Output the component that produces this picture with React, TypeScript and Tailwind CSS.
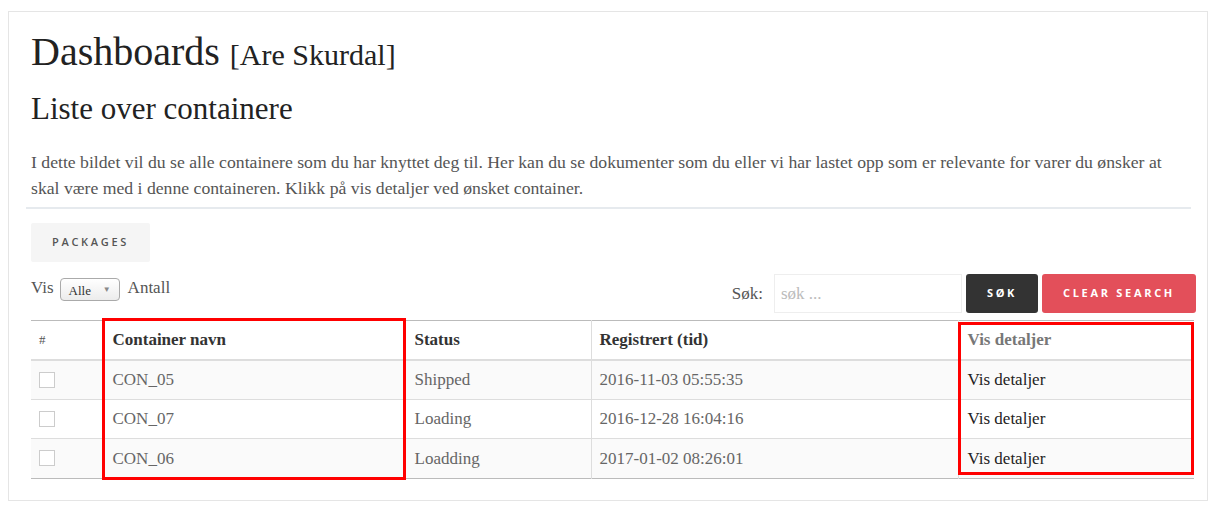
import React from "react"

const serif = "font-['Liberation_Serif','Times_New_Roman',serif]"
const caps = "font-['Open_Sans',sans-serif] font-bold uppercase tracking-[2.7px] text-[11px]"

const rows = [
  { name: "CON_05", status: "Shipped", time: "2016-11-03 05:55:35" },
  { name: "CON_07", status: "Loading", time: "2016-12-28 16:04:16" },
  { name: "CON_06", status: "Loadding", time: "2017-01-02 08:26:01" },
]

export default function App() {
  return (
    <div className={`${serif} bg-white min-h-[523px] w-[1218px] pt-[11px] pl-[8px]`}>
      <div className="w-[1200px] h-[490px] border border-[#e5e5e5] pl-[17px] pr-[11px]">
        <h1 className="mt-[16px] pl-[5px] text-[40px] leading-[48px] text-[#222]">
          Dashboards <span className="text-[30px]">[Are Skurdal]</span>
        </h1>
        <h2 className="mt-[12px] pl-[5px] text-[31px] leading-[36px] text-[#222]">Liste over containere</h2>
        <p className="mt-[22px] pl-[5px] text-[17.7px] leading-[26px] text-[#555] whitespace-nowrap">
          I dette bildet vil du se alle containere som du har knyttet deg til. Her kan du se dokumenter som du eller vi har lastet opp som er relevante for varer du ønsker at
          <br />
          skal være med i denne containeren. Klikk på vis detaljer ved ønsket container.
        </p>
        <div className="mt-[6px] mr-[5px] h-[2px] bg-[#e6eaee]" />

        <div className="mt-[14px] pl-[5px]">
          <button className={`${caps} h-[39px] w-[119px] rounded-[2px] bg-[#f5f5f5] text-[#555] !font-semibold`}>
            Packages
          </button>
        </div>

        <div className="mt-[12px] pl-[5px] flex justify-between items-start">
          <div className="flex items-center gap-[6px] text-[17px] leading-[24px] text-[#555]">
            <span>Vis</span>
            <span className="mt-[4px] flex items-center justify-between h-[23px] w-[60px] rounded-[4px] border border-[#aaa] bg-gradient-to-b from-white to-[#ececec] pl-[8px] pr-[8px] text-[13px] text-[#333]">
              <span className="mt-[3px]">Alle</span>
              <span className="text-[8px] text-[#888]">▼</span>
            </span>
            <span className="ml-[2px]">Antall</span>
          </div>
          <div className="flex items-center">
            <span className="text-[17px] text-[#555] mr-[11px]">Søk:</span>
            <div className="h-[39px] w-[188px] border border-[#eee] flex items-center pl-[6px] text-[17px] text-[#bbb]">
              søk ...
            </div>
            <button className={`${caps} ml-[4px] h-[39px] w-[72px] rounded-[3px] bg-[#333333] text-white`}>
              Søk
            </button>
            <button className={`${caps} ml-[4px] h-[39px] w-[154px] rounded-[3px] bg-[#e34f5a] text-white`}>
              Clear search
            </button>
          </div>
        </div>

        <div className="relative mt-[7px] ml-[5px] w-[1163px]">
          <table className="w-full table-fixed border-collapse text-[17px]">
            <colgroup>
              <col className="w-[71px]" />
              <col className="w-[303px]" />
              <col className="w-[186px]" />
              <col className="w-[367px]" />
              <col />
            </colgroup>
            <thead>
              <tr className="h-[39px] border-t border-[#bbb] border-b-2 border-b-[#ddd] text-left text-[#333]">
                <th className="pl-[8px] font-normal text-[13px] text-[#555]">#</th>
                <th className="pl-[10px] border-l border-[#ddd] font-bold">Container navn</th>
                <th className="pl-[9px] border-l border-[#ddd] font-bold">Status</th>
                <th className="pl-[8px] border-l border-[#ddd] font-bold">Registrert (tid)</th>
                <th className="pl-[9px] border-l border-[#ddd] font-bold text-[#777]">Vis detaljer</th>
              </tr>
            </thead>
            <tbody>
              {rows.map((r, i) => (
                <tr
                  key={r.name}
                  className={`h-[39.5px] ${i === rows.length - 1 ? "border-b border-[#bbb]" : "border-b border-[#ddd]"} ${i % 2 === 0 ? "bg-[#fafafa]" : "bg-white"} text-[#666]`}
                >
                  <td className="pl-[8px]">
                    <div className="h-[16px] w-[16px] border border-[#ccc] bg-white" />
                  </td>
                  <td className="pl-[10px] border-l border-[#ddd]">{r.name}</td>
                  <td className="pl-[9px] border-l border-[#ddd]">{r.status}</td>
                  <td className="pl-[8px] border-l border-[#ddd]">{r.time}</td>
                  <td className="pl-[9px] border-l border-[#ddd] text-[#222]">Vis detaljer</td>
                </tr>
              ))}
            </tbody>
          </table>
          <div className="absolute left-[71px] top-[-2px] w-[304px] h-[162px] border-[3px] border-[#ff0000] pointer-events-none" />
          <div className="absolute left-[927px] top-[2px] w-[236px] h-[153px] border-[3px] border-[#ff0000] pointer-events-none" />
        </div>
      </div>
    </div>
  )
}
